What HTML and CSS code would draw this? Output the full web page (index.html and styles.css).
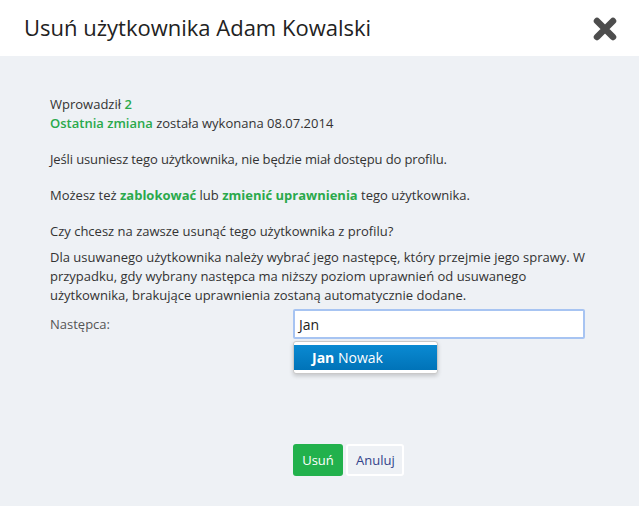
FILE: index.html
```html
<!DOCTYPE html>
<html lang="pl">
<head>
<meta charset="utf-8">
<link rel="stylesheet" href="styles.css">
</head>
<body>
<div class="modal">
  <header class="modal-header">
    <h1 class="title">Usuń użytkownika Adam Kowalski</h1>
    <button class="close" aria-label="Zamknij">
      <svg width="24" height="24" viewBox="0 0 24 24"><path d="M4 4 L20 20 M20 4 L4 20" stroke="#4d4d4d" stroke-width="6.5" stroke-linecap="round"/></svg>
    </button>
  </header>
  <main class="modal-body">
    <p class="p">Wprowadził <b class="g">2</b><br><b class="g">Ostatnia zmiana</b> została wykonana 08.07.2014</p>
    <p class="p gap tight">Jeśli usuniesz tego użytkownika, nie będzie miał dostępu do profilu.</p>
    <p class="p gap">Możesz też <b class="g strong">zablokować</b> lub <b class="g strong">zmienić uprawnienia</b> tego użytkownika.</p>
    <p class="p gap">Czy chcesz na zawsze usunąć tego użytkownika z profilu?</p>
    <p class="p small-gap">Dla usuwanego użytkownika należy wybrać jego następcę, który przejmie jego sprawy. W przypadku, gdy wybrany następca ma niższy poziom uprawnień od usuwanego użytkownika, brakujące uprawnienia zostaną automatycznie dodane.</p>
    <div class="field">
      <label class="label">Następca:</label>
      <div class="input-wrap">
        <div class="input">Jan</div>
        <div class="dropdown">
          <div class="item"><b>Jan</b> Nowak</div>
        </div>
      </div>
    </div>
    <div class="actions">
      <button class="btn btn-primary">Usuń</button>
      <button class="btn btn-default">Anuluj</button>
    </div>
  </main>
</div>
</body>
</html>
```
FILE: styles.css
```css
* { box-sizing: border-box; }
html, body { margin: 0; padding: 0; }
body {
  width: 639px;
  height: 506px;
  overflow: hidden;
  font-family: "Open Sans", "Noto Sans", sans-serif;
  color: #333;
  background: #eef1f5;
}
.modal { display: flex; flex-direction: column; height: 506px; }
.modal-header {
  height: 56px;
  background: #fff;
  display: flex;
  align-items: center;
  justify-content: space-between;
  padding: 0 22px 0 24px;
}
.title {
  margin: 0;
  font-weight: 400;
  font-size: 22px;
  color: #222;
  line-height: 1;
  padding-bottom: 2px;
}
.close {
  border: 0;
  background: none;
  padding: 0;
  width: 24px;
  height: 24px;
  display: flex;
  margin-top: 2px;
}
.modal-body {
  flex: 1;
  background: #eef1f5;
  padding: 39px 50px 0 50px;
  font-size: 13px;
  line-height: 19px;
}
.p { margin: 0; }
.gap { margin-top: 17px; }
.tight { letter-spacing: -0.13px; }
.small-gap { margin-top: 7px; }
.g { color: #2aa94b; font-weight: 600; }
.strong { font-weight: 700; }
.field {
  display: flex;
  align-items: center;
  margin-top: 4px;
}
.label { width: 243px; color: #555; }
.input-wrap { position: relative; width: 292px; }
.input {
  height: 30px;
  background: #fff;
  border: 2px solid #a7c4f2;
  border-radius: 2px;
  padding: 0 4px;
  display: flex;
  align-items: center;
  font-size: 14px;
  color: #222;
}
.dropdown {
  position: absolute;
  left: 0;
  top: 32px;
  width: 145px;
  background: #fff;
  border: 1px solid #c9c9c9;
  border-radius: 3px;
  padding: 3px 0 3px 0;
  box-shadow: 0 2px 4px rgba(0,0,0,0.18);
}
.item {
  background: linear-gradient(#0a8ad2, #0073b8);
  color: #fff;
  height: 25px;
  line-height: 25px;
  padding-left: 18px;
  font-size: 14px;
}
.item b { font-weight: 700; }
.actions {
  display: flex;
  gap: 3px;
  margin-top: 105px;
  padding-left: 243px;
}
.btn {
  font-family: inherit;
  font-size: 13px;
  height: 32px;
  border-radius: 3px;
  padding: 0 8px;
  cursor: pointer;
}
.btn-primary {
  background: #22b14c;
  color: #fff;
  border: 0;
  width: 50px;
}
.btn-default {
  background: transparent;
  color: #33438a;
  border: 2px solid #fff;
  width: 58px;
}
```
